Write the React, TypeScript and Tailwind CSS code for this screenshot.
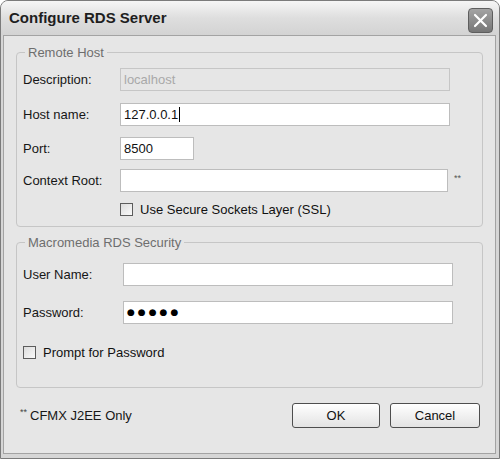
import React from "react"

const font = { fontFamily: '"Liberation Sans", Arial, sans-serif' }

function Field({ className = "", disabled = false, children }: { className?: string; disabled?: boolean; children?: React.ReactNode }) {
  return (
    <div
      className={
        "h-[23px] flex items-center px-[3px] border text-[13px] " +
        (disabled ? "bg-[#e6e6e6] border-[#c6c6c6] text-[#a9a9a9] " : "bg-white border-[#bdbdbd] text-[#111] ") +
        className
      }
    >
      {children}
    </div>
  )
}

function Check({ label }: { label: string }) {
  return (
    <div className="flex items-center h-[13px] gap-[7px]">
      <span className="w-[13px] h-[13px] border border-[#5c5c5c] bg-gradient-to-br from-[#dcdcdc] to-[#fafafa]" />
      <span className="text-[13px] text-[#111] leading-none">{label}</span>
    </div>
  )
}

function Row({ label, children }: { label: string; children: React.ReactNode }) {
  return (
    <div className="flex items-center">
      <span className="w-[97px] text-[13px] text-[#161616]">{label}</span>
      {children}
    </div>
  )
}

function Legend({ text }: { text: string }) {
  return (
    <div className="-mt-[8px] ml-[8px] w-fit px-[3px] bg-[#e6e6e6] text-[13px] leading-[15px] text-[#6e6e6e]">
      {text}
    </div>
  )
}

export default function App() {
  return (
    <div className="w-[500px] h-[459px] bg-white" style={font}>
      <div className="w-[500px] h-[459px] flex flex-col border border-[#7b7b7b] rounded-t-[8px] bg-[#d6d6d6] overflow-hidden">
        {/* Title bar */}
        <div className="h-[34px] shrink-0 flex items-center justify-between pl-[8px] pr-[6px] bg-gradient-to-b from-[#f6f6f6] via-[#dedede] to-[#d3d3d3]">
          <span className="text-[15px] font-bold text-[#1e1e1e] mt-[1px]">Configure RDS Server</span>
          <button className="w-[25px] h-[25px] mt-[5px] rounded-[4px] border border-[#5e5e5e] bg-gradient-to-b from-[#a4a4a4] to-[#767676] flex items-center justify-center">
            <svg width="15" height="15" viewBox="0 0 15 15">
              <path d="M2 2 L13 13 M13 2 L2 13" stroke="#ffffff" strokeWidth="2.2" strokeLinecap="round" />
            </svg>
          </button>
        </div>

        {/* Client area */}
        <div className="flex-1 ml-[2px] mr-[3px] mb-[4px] border border-[#a3a3a3] bg-[#e6e6e6] flex flex-col">
          {/* Remote Host */}
          <div className="mt-[16px] ml-[12px] w-[467px] h-[175px] border border-[#c6c6c6] rounded-[4px] flex flex-col">
            <Legend text="Remote Host" />
            <div className="pl-[6px] flex flex-col">
              <div className="mt-[8px]">
                <Row label="Description:">
                  <Field disabled className="w-[330px]">localhost</Field>
                </Row>
              </div>
              <div className="mt-[12px]">
                <Row label="Host name:">
                  <Field className="w-[330px]">
                    127.0.0.1
                    <span className="ml-[1px] w-[1px] h-[15px] bg-black" />
                  </Field>
                </Row>
              </div>
              <div className="mt-[11px]">
                <Row label="Port:">
                  <Field className="w-[74px]">8500</Field>
                </Row>
              </div>
              <div className="mt-[9px]">
                <Row label="Context Root:">
                  <Field className="w-[328px]" />
                  <span className="ml-[6px] -mt-[3px] text-[9px] text-[#555]">**</span>
                </Row>
              </div>
              <div className="mt-[11px] pl-[97px]">
                <Check label="Use Secure Sockets Layer (SSL)" />
              </div>
            </div>
          </div>

          {/* Macromedia RDS Security */}
          <div className="mt-[15px] ml-[12px] w-[467px] h-[146px] border border-[#c6c6c6] rounded-[4px] flex flex-col">
            <Legend text="Macromedia RDS Security" />
            <div className="pl-[6px] flex flex-col">
              <div className="mt-[13px] flex items-center">
                <span className="w-[100px] text-[13px] text-[#161616]">User Name:</span>
                <Field className="w-[330px]" />
              </div>
              <div className="mt-[15px] flex items-center">
                <span className="w-[100px] text-[13px] text-[#161616]">Password:</span>
                <Field className="w-[330px]">
                  <span className="text-[9px] tracking-[3px] text-black" style={{ fontFamily: '"DejaVu Sans", sans-serif' }}>
                    ●●●●●
                  </span>
                </Field>
              </div>
              <div className="mt-[22px]">
                <Check label="Prompt for Password" />
              </div>
            </div>
          </div>

          {/* Footer */}
          <div className="mt-[15px] pl-[16px] pr-[15px] flex items-center justify-between">
            <div className="flex items-start text-[13px] text-[#161616]">
              <span className="text-[9px] leading-[9px] mt-[2px] mr-[3px] text-[#444]">**</span>
              <span>CFMX J2EE Only</span>
            </div>
            <div className="flex gap-[10px]">
              <button className="w-[88px] h-[25px] rounded-[3px] border border-[#4e4e4e] bg-gradient-to-b from-[#ffffff] to-[#e3e3e3] text-[13px] text-[#111]">
                OK
              </button>
              <button className="w-[90px] h-[25px] rounded-[3px] border border-[#4e4e4e] bg-gradient-to-b from-[#ffffff] to-[#e3e3e3] text-[13px] text-[#111]">
                Cancel
              </button>
            </div>
          </div>
        </div>
      </div>
    </div>
  )
}
